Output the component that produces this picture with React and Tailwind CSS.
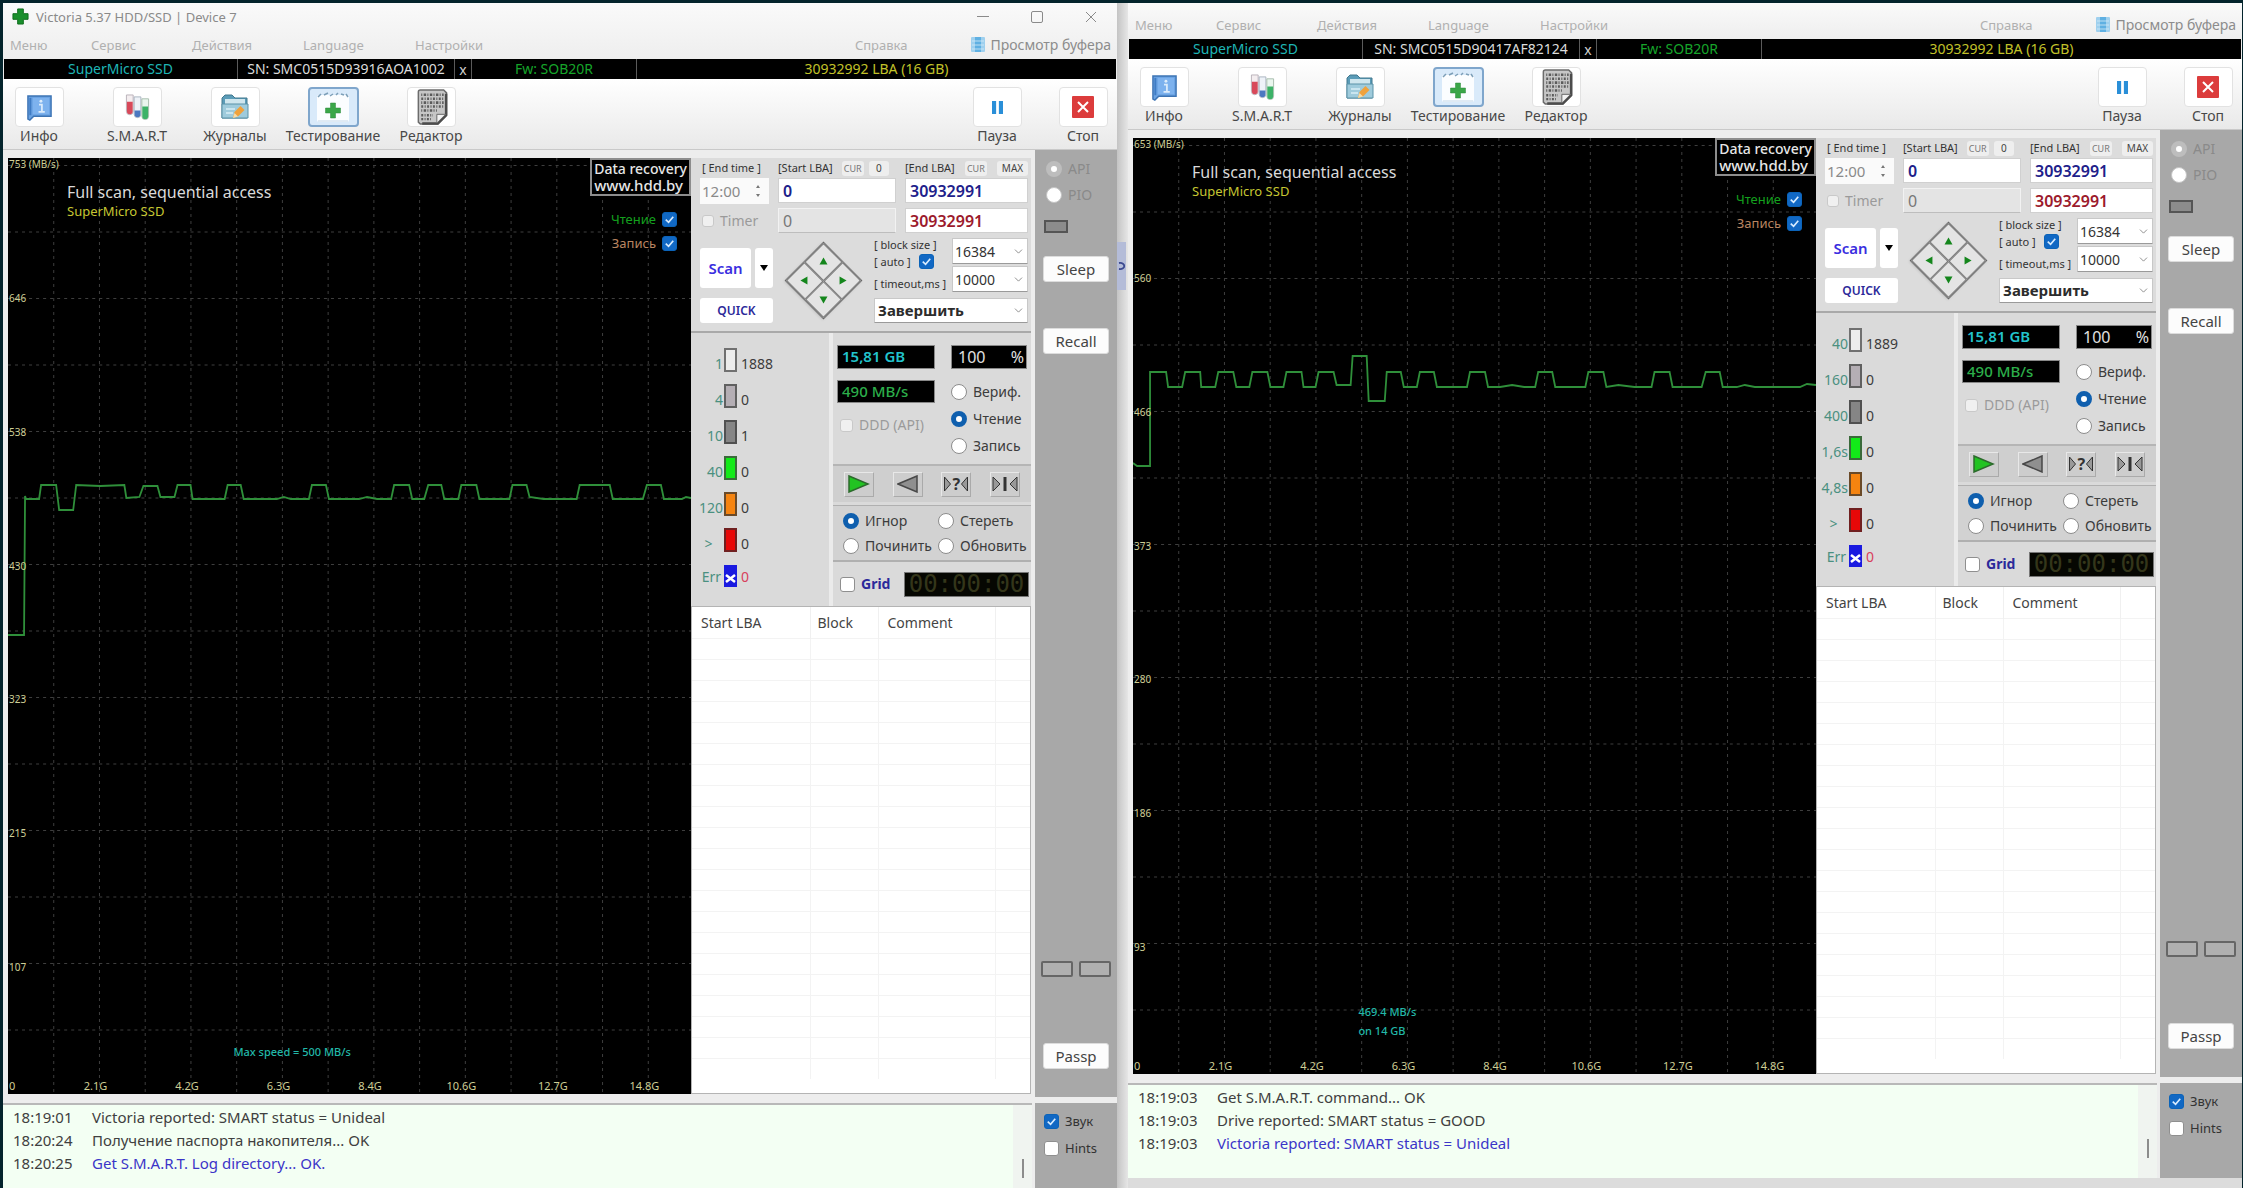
import React, { useId } from "react";
import { ChevronDown } from "lucide-react";

const LEFT_TRACE =
  "0,477 16,477 17,338 18,341 31,341 33,327 48,327 51,352 65,352 68,327 92,328 116,327 118,340 131,339 135,328 149,328 152,339 166,339 169,327 182,327 184,341 216,341 219,327 232,327 235,341 268,341 275,339 282,341 300,341 303,327 317,327 320,341 350,341 358,339 368,341 382,341 385,327 400,327 403,341 415,341 419,327 432,327 435,341 449,341 452,327 467,327 470,341 500,341 503,327 517,327 520,339 534,341 567,341 570,327 600,327 603,341 633,341 637,327 651,327 654,341 672,341 676,339 681,340";
const RIGHT_TRACE =
  "0,325 4,328 17,328 17,234 33,234 35,249 49,249 52,234 67,234 68,249 82,249 85,234 100,234 103,249 116,249 119,234 134,234 137,249 150,249 153,234 168,234 170,249 182,249 185,234 200,234 203,247 217,247 219,218 233,218 235,263 251,263 253,234 267,234 270,249 283,249 286,234 300,234 303,249 333,249 336,234 351,234 354,249 366,249 378,247 390,249 401,249 404,234 418,234 421,249 451,249 454,234 469,234 472,249 484,247 500,249 517,249 520,234 535,234 538,249 567,249 571,234 585,234 588,249 602,249 610,247 620,249 665,249 672,246 681,247";

const BINARY_ROWS = [9, 13, 17, 21, 25];

const devices = [
  {
    id: "left",
    title: "Victoria 5.37 HDD/SSD | Device 7",
    sn: "SN: SMC0515D93916AOA1002",
    axis: ["753 (MB/s)", "646", "538", "430", "323", "215", "107"],
    trace: LEFT_TRACE,
    note: { lines: ["Max speed = 500 MB/s"], pos: "left-[33%] top-[94.4%]" },
    blocks: [
      ["1", "1888"],
      ["4", "0"],
      ["10", "1"],
      ["40", "0"],
      ["120", "0"],
      [">", "0"],
    ],
    log: [
      ["18:19:01", "Victoria reported: SMART status = Unideal"],
      ["18:20:24", "Получение паспорта накопителя... OK"],
      ["18:20:25", "Get S.M.A.R.T. Log directory... OK."],
    ],
  },
  {
    id: "right",
    title: null,
    sn: "SN: SMC0515D90417AF82124",
    axis: ["653 (MB/s)", "560", "466", "373", "280", "186", "93"],
    trace: RIGHT_TRACE,
    note: { lines: ["469.4 MB/s", "on 14 GB"], pos: "left-[33%] top-[92.3%]" },
    blocks: [
      ["40", "1889"],
      ["160", "0"],
      ["400", "0"],
      ["1,6s", "0"],
      ["4,8s", "0"],
      [">", "0"],
    ],
    log: [
      ["18:19:03", "Get S.M.A.R.T. command... OK"],
      ["18:19:03", "Drive reported: SMART status = GOOD"],
      ["18:19:03", "Victoria reported: SMART status = Unideal"],
    ],
  },
];

const BLOCK_COLORS = [
  "bg-[#ececec] border-[#707070]",
  "bg-[#b4aeb4] border-[#606060]",
  "bg-[#858585] border-[#505050]",
  "bg-[#12ea18] border-[#3a6a3a]",
  "bg-[#f58410] border-[#6a4a28]",
  "bg-[#e80808] border-[#702020]",
];

/* ---------- shared controls ---------- */

function Check({ label, checked, disabled, size = "size-[15px]", labelClass = "", before = false, hidden = false }) {
  const id = useId();
  const text = (
    <label htmlFor={id} className={hidden ? "sr-only" : labelClass}>
      {label}
    </label>
  );
  return (
    <span className="inline-flex items-center gap-[6px]">
      {before && text}
      <span className={"relative grid shrink-0 " + size}>
        <input
          id={id}
          type="checkbox"
          defaultChecked={checked}
          disabled={disabled}
          className="peer col-start-1 row-start-1 size-full appearance-none rounded-[3px] border border-[#8f8f8f] bg-white checked:border-[#0b63b8] checked:bg-[#1168c4] disabled:border-[#c9c9c9] disabled:bg-[#f0f0f0]"
        />
        <svg
          viewBox="0 0 16 16"
          className="pointer-events-none invisible col-start-1 row-start-1 size-full peer-checked:visible"
          fill="none"
          stroke="#d8ecff"
          strokeWidth="1.8"
        >
          <path d="M4 8.2 7 11l5-6" />
        </svg>
      </span>
      {!before && text}
    </span>
  );
}

function Radio({ name, label, checked, disabled, labelClass = "text-[#3c3c3c]" }) {
  const id = useId();
  return (
    <span className="flex items-center gap-[6px]">
      <input
        id={id}
        type="radio"
        name={name}
        defaultChecked={checked}
        disabled={disabled}
        className="size-4 shrink-0 appearance-none rounded-full border border-[#8c8c8c] bg-white checked:border-[5px] checked:border-[#0f5fae] disabled:border-[#c4c4c4] disabled:checked:border-[5px] disabled:checked:border-[#bdbdbd]"
      />
      <label htmlFor={id} className={labelClass}>
        {label}
      </label>
    </span>
  );
}

function Select({ label, value, className, iconClass = "right-[3px]" }) {
  return (
    <span className="relative grid items-center">
      <select
        aria-label={label}
        className={"w-full appearance-none rounded-[1px] border border-[#c8c8c8] border-b-[#9a9a9a] bg-white " + className}
      >
        <option>{value}</option>
      </select>
      <ChevronDown className={"pointer-events-none absolute size-[13px] text-[#777] " + iconClass} strokeWidth={1.5} />
    </span>
  );
}

/* ---------- icons ---------- */

function CrossIcon({ className, dark = "#0d6b1b", light = "#1a8f2c" }) {
  return (
    <svg viewBox="0 0 18 18" className={className}>
      <path d="M6 1h6v5h5v6h-5v5H6v-5H1V6h5z" fill={light} stroke={dark} strokeWidth="1" />
    </svg>
  );
}

function InfoIcon() {
  return (
    <svg viewBox="0 0 28 30" className="h-[29px] w-[27px]">
      <path d="M2 3h24v21H8l-4 4-2-1z" fill="#6aa2e2" stroke="#3d74b4" strokeWidth="1.5" />
      <path d="M4.500 5v18" stroke="#3f7cc4" strokeWidth="2" />
      <rect x="7" y="5" width="17" height="17" fill="#7db2ee" />
      <circle cx="15.500" cy="8.500" r="1.500" fill="#dcecfb" />
      <path d="M13.500 12h3v7M13 19.500h6.500" stroke="#dcecfb" strokeWidth="1.800" fill="none" />
    </svg>
  );
}

function SmartIcon() {
  return (
    <svg viewBox="0 0 28 30" className="h-[29px] w-[27px]">
      <path d="M2.500 2v17a3.500 3.500 0 0 0 7 0V2z" fill="#f4eef0" stroke="#b9b2ba" />
      <path d="M3 9v10a3 3 0 0 0 6 0V9z" fill="#d8495a" />
      <path d="M10.500 4v18a3.500 3.500 0 0 0 7 0V4z" fill="#eef2f8" stroke="#aab4c0" />
      <path d="M11 18v4a3 3 0 0 0 6 0v-4z" fill="#4c78c0" />
      <path d="M18.500 6v18a3.500 3.500 0 0 0 7 0V6z" fill="#eaf6ee" stroke="#a8bcae" />
      <path d="M19 14v10a3 3 0 0 0 6 0V14z" fill="#3db268" />
    </svg>
  );
}

function JournalIcon() {
  return (
    <svg viewBox="0 0 30 28" className="h-[28px] w-[30px]">
      <path d="M2 5l3-3h7l3 3h12v20H2z" fill="#5b9cb8" stroke="#42788e" />
      <path d="M5 6h20v6H5z" fill="#cfe6ee" />
      <path d="M2 11h26v14H2z" fill="#9fcbdc" stroke="#5a93a8" />
      <path d="M6 20h7M6 16h9" stroke="#d9eef5" strokeWidth="1.500" />
      <path d="M13 25l1.500-6 6-6 4 4-6 6z" fill="#f0a23c" />
      <path d="M13 25l1.500-5 3.500 3.500z" fill="#f7dca8" />
    </svg>
  );
}

function TestIcon() {
  return (
    <svg viewBox="0 0 42 34" className="h-[34px] w-[42px]">
      <rect x="5" y="5" width="32" height="27" rx="2" fill="#fbfdff" />
      <path d="M6 7l3-3M12 5l4-2M18 6l3-2M24 5l2-2M29 4l3 1M34 4l2 3" stroke="#7d9fb8" strokeWidth="1.500" />
      <path d="M6 31h30" stroke="#c3d7e8" />
      <path d="M18.500 13h5v5h5v5h-5v5h-5v-5h-5v-5h5z" fill="#3aa648" stroke="#2b8a3a" strokeWidth=".5" />
    </svg>
  );
}

function EditorIcon() {
  return (
    <svg viewBox="0 0 36 38" className="h-[37px] w-[36px]">
      <path d="M5 3q0-2 2-2h24l3 3v23l-9 9H7l-2-2z" fill="#c6c6c6" stroke="#6c6c6c" strokeWidth="1.500" />
      <path d="M33.500 5v22l-8.500 8.500H9" fill="none" stroke="#4c4c4c" strokeWidth="2.500" />
      {BINARY_ROWS.map((y, i) => (
        <path
          key={y}
          d={`M8 ${y - 3}h${i > 3 ? 16 : 23}`}
          stroke="#5a5a5a"
          strokeWidth="2.600"
          strokeDasharray={i % 2 ? "2 1.500 1 1.500" : "1 1.500 2.500 1.300"}
        />
      ))}
      <path d="M8 27h12M8 31h10" stroke="#5a5a5a" strokeWidth="2.400" strokeDasharray="2 1.400 1 1.400" />
      <path d="M24 35V26h9z" fill="#f2f2f2" stroke="#666" />
    </svg>
  );
}

const TOOLS = [
  { label: "Инфо", icon: InfoIcon },
  { label: "S.M.A.R.T", icon: SmartIcon },
  { label: "Журналы", icon: JournalIcon },
  { label: "Тестирование", icon: TestIcon, active: true },
  { label: "Редактор", icon: EditorIcon },
];

/* ---------- window header ---------- */

function TitleBar({ title }) {
  return (
    <div className="flex h-[27px] items-center pl-[9px] pr-[20px] text-[#8a8a8a]">
      <CrossIcon className="size-[17px]" />
      <h1 className="ml-[7px] flex-1 text-[13px] leading-5">{title}</h1>
      <div className="flex items-center gap-[42px]">
        <button aria-label="Minimize" className="grid h-5 w-3 place-items-center">
          <span className="h-px w-3 bg-[#8a8a8a]" />
        </button>
        <button aria-label="Maximize" className="size-3 rounded-[2px] border border-[#8a8a8a]" />
        <button aria-label="Close">
          <svg viewBox="0 0 12 12" className="size-3" stroke="#8a8a8a" fill="none">
            <path d="M1 1l10 10M11 1 1 11" />
          </svg>
        </button>
      </div>
    </div>
  );
}

function MenuBar() {
  return (
    <nav className="flex h-[29px] items-center pl-[7px] pr-[6px] text-[13px] leading-5 text-[#b0b0b0]">
      <button className="w-[81px] text-left">Меню</button>
      <button className="w-[101px] text-left">Сервис</button>
      <button className="w-[111px] text-left">Действия</button>
      <button className="w-[112px] text-left">Language</button>
      <button className="flex-1 text-left">Настройки</button>
      <button className="mr-[64px]">Справка</button>
      <button className="flex items-center gap-[5px] text-[14px] text-[#8c8c8c]">
        <svg viewBox="0 0 14 16" className="h-4 w-[14px]">
          <rect width="14" height="15" rx="1" fill="#9fd0ee" />
          <rect x="4" width="6" height="15" fill="#5fb0e2" />
          <path d="M1 4h12M1 8h12M1 12h12" stroke="#d3ebf8" strokeWidth=".8" />
        </svg>
        Просмотр буфера
      </button>
    </nav>
  );
}

function DriveBar({ sn }) {
  return (
    <div className="mx-px flex h-[20px] shrink-0 divide-x divide-[#5a5a5a] bg-black text-center text-[14px] leading-[19px]">
      <div className="w-[234px] text-[#1fb5b5]">SuperMicro SSD</div>
      <div className="w-[217px] whitespace-nowrap text-[#dcdcdc]">{sn}</div>
      <button aria-label="Close drive" className="w-[17px] text-[#d0d0d0]">x</button>
      <div className="w-[165px] text-[#16a52a]">Fw: SOB20R</div>
      <div className="flex-1 text-[#c2c22a]">30932992 LBA (16 GB)</div>
    </div>
  );
}

function Toolbar() {
  return (
    <div className="flex h-[71px] shrink-0 justify-between border-b border-[#c9c9c9] bg-linear-to-b from-[#ffffff] to-[#e9e9e9] pt-[8px] text-[14px] leading-[18px] text-[#484848]">
      <div className="flex">
        {TOOLS.map(({ label, icon: Icon, active }) => (
          <button key={label} className="flex w-[98px] flex-col items-center first:-ml-[13px]">
            <span
              className={
                active
                  ? "grid h-[40px] w-[51px] place-items-center rounded-[4px] border-2 border-[#7fa6cc] bg-[#d9eafa]"
                  : "grid h-[40px] w-[49px] place-items-center rounded-[4px] border border-[#e2e2e2] bg-white"
              }
            >
              <Icon />
            </span>
            {label}
          </button>
        ))}
      </div>
      <div className="flex">
        <button className="flex w-[86px] flex-col items-center">
          <span className="grid h-[40px] w-[49px] place-items-center rounded-[4px] border border-[#e2e2e2] bg-white">
            <svg viewBox="0 0 12 14" className="h-[13px] w-[11px]" fill="#2a8fd8">
              <path d="M0 0h4.500v14H0zM7.500 0H12v14H7.500z" />
            </svg>
          </span>
          Пауза
        </button>
        <button className="mr-[-9px] flex w-[86px] flex-col items-center">
          <span className="grid h-[40px] w-[49px] place-items-center rounded-[4px] border border-[#e2e2e2] bg-white">
            <svg viewBox="0 0 22 22" className="size-[22px]">
              <rect width="22" height="22" rx="1" fill="#dc3c3c" />
              <path d="M6 6l10 10M16 6 6 16" stroke="#fff" strokeWidth="2" />
            </svg>
          </span>
          Стоп
        </button>
      </div>
    </div>
  );
}

/* ---------- speed chart ---------- */

const V_LINES = Array.from({ length: 14 }, (_, i) => 45.6 * (i + 1));
const H_LINES = Array.from({ length: 14 }, (_, i) => 7.5 + 66.5 * i);
const X_LABELS = ["2.1G", "4.2G", "6.3G", "8.4G", "10.6G", "12.7G", "14.8G"];

function SpeedChart({ device }) {
  return (
    <section aria-label="Speed chart" className="relative min-w-0 flex-1 overflow-hidden bg-black">
      <svg
        viewBox="0 0 681 936"
        preserveAspectRatio="none"
        className="absolute inset-0 size-full"
        fill="none"
      >
        {V_LINES.map((x) => (
          <path key={x} d={`M${x} 0V936`} stroke="#3e3e3e" strokeDasharray="3 4" />
        ))}
        {H_LINES.map((y) => (
          <path key={y} d={`M0 ${y}H681`} stroke="#3e3e3e" strokeDasharray="3 4" />
        ))}
        <polyline points={device.trace} stroke="#2f8f3a" strokeWidth="1.800" />
      </svg>
      <ul className="absolute inset-x-0 top-0 h-full text-[10px] leading-3 text-[#cfcf96]">
        {device.axis.map((label) => (
          <li key={label} className="h-[14.3%] pl-[1px]">
            {label}
          </li>
        ))}
      </ul>
      <div className="absolute bottom-[2px] left-[1px] text-[11px] leading-3 text-[#cfcf96]">0</div>
      <ul className="absolute bottom-[2px] left-[9%] flex w-[94%] text-center text-[11px] leading-3 text-[#cfcf96]">
        {X_LABELS.map((label) => (
          <li key={label} className="w-[14.25%] shrink-0">
            <span className="block w-[52px]">{label}</span>
          </li>
        ))}
      </ul>
      <div className="absolute left-[59px] top-[24px] leading-5">
        <p className="text-[16px] text-[#dadada]">Full scan, sequential access</p>
        <p className="text-[13px] leading-[18px] text-[#c6c632]">SuperMicro SSD</p>
      </div>
      <div className="absolute right-0 top-0 flex flex-col items-end">
        <a
          href="#hdd"
          className="border-2 border-[#8d8d8d] bg-black px-[2px] text-[14px] font-medium leading-[17px] text-[#e6e6e6]"
        >
          Data recovery
          <br />
          <span className="text-[15px]">www.hdd.by</span>
        </a>
        <div className="mr-[14px] mt-[13px] flex flex-col items-end gap-[4px] text-[13px] leading-5">
          <Check label="Чтение" checked before labelClass="text-[#14a01e]" />
          <Check label="Запись" checked before labelClass="text-[#b98560]" />
        </div>
      </div>
      <div className={"absolute text-[11px] font-medium leading-[19px] text-[#22b8a8] " + device.note.pos}>
        {device.note.lines.map((line) => (
          <p key={line}>{line}</p>
        ))}
      </div>
    </section>
  );
}

/* ---------- scan settings ---------- */

const miniBtn = "h-[15px] rounded-[3px] bg-[#eeeeee] leading-[15px]";
const lbaInput = "h-[25px] w-full min-w-0 border border-[#d0d0d0] bg-white px-1 text-[16px] font-semibold leading-5";

function Arrow({ path, label }) {
  return (
    <button aria-label={label} className="grid place-items-center border border-[#777] bg-[#e4e4e4]">
      <svg viewBox="0 0 10 10" className="size-[10px] -rotate-45" fill="#14861c">
        <path d={path} />
      </svg>
    </button>
  );
}

function ScanSettings() {
  return (
    <section className="h-[175px] shrink-0 border-b-2 border-[#a9a9a9] bg-[#dcdcdc] pl-[9px] pr-[3px]">
      <div className="grid grid-cols-[69px_118px_1fr] gap-x-[9px]">
        <span className="whitespace-nowrap pl-[2px] text-[11px] leading-[20px] text-[#333]">[ End time ]</span>
        <div className="flex items-center gap-[5px] text-[11px] text-[#333]">
          <span className="mr-1 whitespace-nowrap leading-[20px]">[Start LBA]</span>
          <button className={miniBtn + " w-[22px] text-[9px] text-[#777]"}>CUR</button>
          <button className={miniBtn + " w-[20px] text-[10px] text-[#444]"}>0</button>
        </div>
        <div className="flex items-center justify-between text-[11px] text-[#333]">
          <span className="whitespace-nowrap leading-[20px]">[End LBA]</span>
          <button className={miniBtn + " w-[22px] text-[9px] text-[#777]"}>CUR</button>
          <button className={miniBtn + " w-[31px] text-[10px] text-[#444]"}>MAX</button>
        </div>
        <span className="flex h-[26px] items-center justify-between bg-[#fafafa] pl-[2px] pr-2">
          <input aria-label="End time" defaultValue="12:00" disabled className="w-[46px] text-[15px] text-[#8a8a8a]" />
          <svg viewBox="0 0 6 14" className="h-[14px] w-[6px]" fill="#777">
            <path d="M1 4l2-3 2 3zM1 10l2 3 2-3z" />
          </svg>
        </span>
        <input aria-label="Start LBA" defaultValue="0" className={lbaInput + " text-[#20208a]"} />
        <input aria-label="End LBA" defaultValue="30932991" className={lbaInput + " text-[#20208a]"} />
        <span className="mt-[4px] flex items-center pl-[2px] text-[14px] text-[#9a9a9a]">
          <Check label="Timer" disabled size="size-[12px]" labelClass="text-[#9a9a9a]" />
        </span>
        <input
          aria-label="Current LBA"
          defaultValue="0"
          readOnly
          className="mt-[4px] h-[25px] w-full min-w-0 border border-[#f2f2f2] border-b-[#bdbdbd] bg-[#e4e4e4] px-1 text-[16px] text-[#777]"
        />
        <input aria-label="Last LBA" defaultValue="30932991" className={lbaInput + " mt-[4px] text-[#9c1a2c]"} />
      </div>

      <div className="mt-[5px] flex justify-between">
        <div className="flex w-[73px] flex-col gap-[10px] pt-[10px] font-semibold">
          <div className="flex h-[40px] gap-1">
            <button className="flex-1 rounded-[3px] bg-white text-[15px] text-[#3a2ee0]">Scan</button>
            <button aria-label="Scan options" className="grid w-[18px] place-items-center rounded-[3px] bg-white">
              <svg viewBox="0 0 8 6" className="h-[6px] w-2">
                <path d="M0 0h8L4 6z" />
              </svg>
            </button>
          </div>
          <button className="h-[25px] rounded-[3px] bg-white text-[12px] text-[#2c2a9a]">QUICK</button>
        </div>
        <div className="grid size-[76px] place-items-center self-center">
          <div className="grid size-[55px] rotate-45 grid-cols-2 grid-rows-2 border border-[#666] shadow-sm">
            <Arrow label="Up" path="M5 1l4 7H1z" />
            <Arrow label="Right" path="M9 5 2 9V1z" />
            <Arrow label="Left" path="M1 5l7-4v8z" />
            <Arrow label="Down" path="M5 9 1 2h8z" />
          </div>
        </div>
        <div className="flex w-[154px] flex-col justify-between">
          <div className="flex justify-between">
            <div className="flex w-[78px] flex-col whitespace-nowrap text-[11px] leading-[19px] text-[#333]">
              <span className="leading-[14px]">[ block size ]</span>
              <span className="flex h-[18px] items-center gap-[8px]">
                [ auto ]
                <Check label="Auto block size" checked hidden />
              </span>
              <span className="pt-[4px]">[ timeout,ms ]</span>
            </div>
            <div className="flex w-[76px] flex-col gap-[2px]">
              <Select label="Block size" value="16384" className="h-[26px] pl-[2px] text-[14px] text-[#333]" />
              <Select label="Timeout" value="10000" className="h-[26px] pl-[2px] text-[14px] text-[#333]" />
            </div>
          </div>
          <Select
            label="After scan"
            value="Завершить"
            className="h-[25px] pl-[3px] text-[15px] font-bold text-[#2c2c2c]"
          />
        </div>
      </div>
    </section>
  );
}

/* ---------- results ---------- */

const triBtn = "grid h-[25px] w-[30px] place-items-center border border-[#e8e8e8] border-b-[#aaa] border-r-[#aaa] bg-[#cdcdcd]";

function Results({ device }) {
  return (
    <section className="flex h-[273px] shrink-0 bg-[#dadada]">
      <ul className="w-[142px] border-r-4 border-[#ebebeb] pl-[2px] pt-[15px] text-[14px]">
        {device.blocks.map(([label, count], i) => (
          <li key={label} className="mb-3 flex h-6 items-end">
            <span
              className={
                label === ">"
                  ? "w-[31px] text-center leading-4 text-[#4a9080]"
                  : "w-[31px] whitespace-nowrap pr-px text-right leading-4 text-[#4a9080]"
              }
            >
              {label}
            </span>
            <span className={"h-6 w-[13px] border-2 " + BLOCK_COLORS[i]} />
            <span className="pl-1 leading-4 text-[#3c3c3c]">{count}</span>
          </li>
        ))}
        <li className="flex h-6 items-center">
          <span className="w-[31px] pr-[3px] text-right text-[#4a9080]">Err</span>
          <svg viewBox="0 0 13 22" className="h-[22px] w-[13px]">
            <rect width="13" height="22" fill="#1a1ae0" />
            <path d="M2 10l9 7M11 10l-9 7" stroke="#fff" strokeWidth="2.500" />
          </svg>
          <span className="pl-1 text-[#d8405c]">0</span>
        </li>
      </ul>

      <div className="min-w-0 flex-1 text-[14px] leading-[18px]">
        <div className="flex h-[131px] justify-between pl-[4px] pr-[4px] pt-[12px]">
          <div className="flex w-[98px] flex-col">
            <output className="h-[24px] border border-[#888] bg-black px-1 text-[15px] font-semibold leading-[21px] text-[#22c4cc]">
              15,81 GB
            </output>
            <output className="mt-[11px] h-[23px] border border-[#888] bg-black px-1 text-[15px] font-medium leading-[20px] text-[#2cae4a]">
              490 MB/s
            </output>
            <div className="mt-[13px] whitespace-nowrap pl-[3px]">
              <Check label="DDD (API)" disabled size="size-[13px]" labelClass="text-[#9a9a9a]" />
            </div>
          </div>
          <div className="w-[76px]">
            <output className="flex h-[24px] justify-between border border-[#888] bg-black pl-[6px] pr-[2px] text-[16px] leading-[22px] text-[#e0e0e0]">
              <span>100</span>
              <span>%</span>
            </output>
            <fieldset className="mt-[14px] flex flex-col gap-[9px]">
              <Radio name={device.id + "-mode"} label="Вериф." />
              <Radio name={device.id + "-mode"} label="Чтение" checked />
              <Radio name={device.id + "-mode"} label="Запись" />
            </fieldset>
          </div>
        </div>

        <div className="flex h-[38px] items-center justify-between border-t-2 border-[#b5b5b5] bg-[#cfcfcf] pl-[11px] pr-[11px]">
          <button aria-label="Forward" className={triBtn}>
            <svg viewBox="0 0 22 18" className="h-[18px] w-[22px]">
              <path d="M1 1l19 8-19 8z" fill="#22c322" stroke="#2c6a2c" strokeWidth="1.500" />
            </svg>
          </button>
          <button aria-label="Backward" className={triBtn}>
            <svg viewBox="0 0 22 18" className="h-[18px] w-[22px]">
              <path d="M20 1 1 9l19 8z" fill="#8f8f8f" stroke="#484848" strokeWidth="1.500" />
            </svg>
          </button>
          <button aria-label="Random" className={triBtn}>
            <span className="flex items-center text-[16px] font-bold text-[#333]">
              <svg viewBox="0 0 8 16" className="h-4 w-[9px]">
                <path d="M1 1l6 7-6 7z" fill="#999" stroke="#333" />
              </svg>
              ?
              <svg viewBox="0 0 8 16" className="h-4 w-[9px]">
                <path d="M7 1 1 8l6 7z" fill="#999" stroke="#333" />
              </svg>
            </span>
          </button>
          <button aria-label="Butterfly" className={triBtn}>
            <svg viewBox="0 0 26 16" className="h-4 w-[26px]">
              <path d="M1 1l7 7-7 7zM25 1l-7 7 7 7z" fill="#999" stroke="#333" />
              <path d="M13 1v14" stroke="#333" strokeWidth="3" />
            </svg>
          </button>
        </div>

        <fieldset className="mt-[3px] grid h-[57px] grid-cols-[95px_1fr] content-center gap-y-[7px] whitespace-nowrap border-b-2 border-t border-[#b0b0b0] bg-[#d2d2d2] pl-[10px]">
          <Radio name={device.id + "-act"} label="Игнор" checked />
          <Radio name={device.id + "-act"} label="Стереть" />
          <Radio name={device.id + "-act"} label="Починить" />
          <Radio name={device.id + "-act"} label="Обновить" />
        </fieldset>

        <div className="flex h-[44px] items-center justify-between pl-[7px] pr-[2px]">
          <Check label="Grid" labelClass="text-[14px] font-bold text-[#2c2a9a]" />
          <time className="h-[25px] w-[125px] border border-[#777] bg-[#060702] text-center font-['DejaVu_Sans_Mono',monospace] text-[24px] leading-[23px] text-[#34361a]">
            00:00:00
          </time>
        </div>
      </div>
    </section>
  );
}

const EMPTY_ROWS = Array.from({ length: 21 }, (_, i) => i);

function BlockTable() {
  return (
    <div className="flex-1 overflow-hidden border border-[#b4b4b4] bg-white">
      <table className="w-full table-fixed border-collapse text-[14px] text-[#444]">
        <thead>
          <tr className="h-[31px] text-left">
            <th className="w-[118px] border-r border-[#f0f0f0] pl-[9px] font-normal">Start LBA</th>
            <th className="w-[68px] border-r border-[#f0f0f0] pl-[7px] font-normal">Block</th>
            <th className="w-[117px] border-r border-[#f0f0f0] pl-[9px] font-normal">Comment</th>
            <th />
          </tr>
        </thead>
        <tbody>
          {EMPTY_ROWS.map((i) => (
            <tr key={i} className="h-[21px] border-t border-[#f3f3f3]">
              <td className="border-r border-[#f3f3f3]" />
              <td className="border-r border-[#f3f3f3]" />
              <td className="border-r border-[#f3f3f3]" />
              <td />
            </tr>
          ))}
        </tbody>
      </table>
    </div>
  );
}

/* ---------- side panel ---------- */

const sideBtn = "h-[26px] w-[66px] rounded-[3px] border border-[#dcdcdc] bg-[#fcfcfc] text-[15px] leading-5 text-[#444]";

function SidePanel({ id }) {
  return (
    <aside className="flex w-[82px] shrink-0 flex-col items-center bg-[#a8a8a8] pt-[9px]">
      <fieldset className="flex w-full flex-col gap-[6px] pl-[11px] text-[14px] leading-5">
        <Radio name={id + "-api"} label="API" checked disabled labelClass="text-[#8a8a8a]" />
        <Radio name={id + "-api"} label="PIO" disabled labelClass="text-[#8a8a8a]" />
      </fieldset>
      <span className="ml-[9px] mt-[15px] h-[13px] w-[24px] self-start border-2 border-[#555] bg-[#8c8c8c]" />
      <button className={sideBtn + " mt-[23px]"}>Sleep</button>
      <button className={sideBtn + " mt-[46px]"}>Recall</button>
      <div className="mb-[66px] mt-auto flex gap-[6px]">
        <span className="h-4 w-8 rounded-[2px] border-2 border-[#666] bg-[#b0b0b0]" />
        <span className="h-4 w-8 rounded-[2px] border-2 border-[#666] bg-[#b0b0b0]" />
      </div>
      <button className={sideBtn + " mb-[28px]"}>Passp</button>
    </aside>
  );
}

/* ---------- log ---------- */

function LogPanel({ device, className }) {
  return (
    <footer className={"flex shrink-0 " + className}>
      <div className="flex min-w-0 flex-1 justify-between border-t-2 border-[#b8b8b8] bg-[#f3fff3]">
        <ol className="flex-1 pl-[10px] pt-[1px] text-[15px] leading-[23px] text-[#404040]">
          {device.log.map(([time, text], i) => (
            <li key={i} className="flex">
              <time className="w-[79px]">{time}</time>
              <span className={i === 2 ? "text-[#3b35c8]" : ""}>{text}</span>
            </li>
          ))}
        </ol>
        <div className="flex w-[19px] justify-center bg-[#f0f4f0] pt-[54px]">
          <span className="h-[19px] w-[2px] bg-[#8c8c8c]" />
        </div>
      </div>
      <div className="ml-[3px] flex w-[82px] flex-col gap-[6px] bg-[#a8a8a8] pl-[9px] pt-[8px] text-[13px] leading-[21px] text-[#333]">
        <Check label="Звук" checked />
        <Check label="Hints" />
      </div>
    </footer>
  );
}

function VictoriaWindow({ device }) {
  return (
    <article className="flex min-w-0 flex-1 flex-col bg-[#ededed]">
      <header className="bg-linear-to-b from-[#fafafa] to-[#eeeeee]">
        {device.title ? <TitleBar title={device.title} /> : <div className="h-[7px]" />}
        <MenuBar />
      </header>
      <DriveBar sn={device.sn} />
      <Toolbar />
      <main className="flex min-h-0 flex-1">
        <div className="flex min-w-0 flex-1 pb-[3px] pl-[5px] pt-[8px]">
          <SpeedChart device={device} />
          <div className="flex w-[340px] shrink-0 flex-col">
            <ScanSettings />
            <Results device={device} />
            <BlockTable />
          </div>
        </div>
        <div className="w-[4px]" />
        <SidePanel id={device.id} />
      </main>
      <LogPanel device={device} className={device.title ? "mt-[6px] h-[85px]" : "mt-[6px] h-[105px] border-b-[10px] border-[#dcdcdc]"} />
    </article>
  );
}

export default function App() {
  return (
    <div className="flex min-h-screen bg-[#04242c] pl-[3px] pr-px pt-[3px] font-['Noto_Sans',sans-serif]">
      <VictoriaWindow device={devices[0]} />
      <div className="w-[11px] shrink-0 bg-linear-to-r from-[#c4c4c4] to-[#e6e6e6] pt-[239px]">
        <button aria-label="Next window" className="grid h-[48px] w-[9px] place-items-center bg-[#b4bcd8]">
          <svg viewBox="0 0 8 10" className="h-[10px] w-2" fill="none" stroke="#3c4a90" strokeWidth="1.800">
            <path d="M1 2c7-1 7 7 0 6" />
          </svg>
        </button>
      </div>
      <VictoriaWindow device={devices[1]} />
    </div>
  );
}
